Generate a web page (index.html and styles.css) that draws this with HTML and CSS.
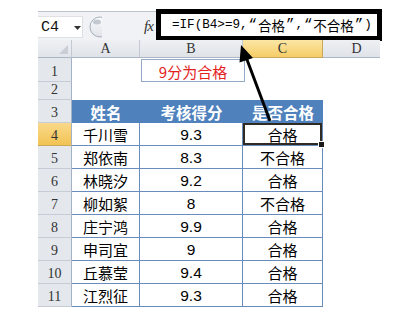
FILE: index.html
```html
<!DOCTYPE html>
<html lang="zh">
<head>
<meta charset="utf-8">
<link rel="stylesheet" href="styles.css">
</head>
<body>
<div class="sheet">
  <div class="fbar">
    <div class="namebox"><span class="ref">C4</span><svg class="dd" width="7" height="4" viewBox="0 0 7 4"><path d="M0 0H7L3.5 4Z" fill="#333"/></svg></div>
    <svg class="knob" width="16" height="22" viewBox="0 0 16 22">
      <defs><linearGradient id="kg" x1="0" y1="0" x2="0" y2="1"><stop offset="0" stop-color="#fbfcfd"/><stop offset="1" stop-color="#dfe3e8"/></linearGradient></defs>
      <circle cx="14" cy="11" r="10" fill="url(#kg)" stroke="#a7afba" stroke-width="1"/>
      <ellipse cx="11" cy="6" rx="4" ry="2.5" fill="#c3c9d1"/>
    </svg>
    <div class="fx">fx</div>
    <div class="formula">=IF(B4&gt;=9,<span class="q">“</span><span class="cj">合格</span><span class="q">”</span>,<span class="q">“</span><span class="cj">不合格</span><span class="q">”</span>)</div>
  </div>
  <div class="grid">
    <div class="corner"></div>
    <div class="ch">A</div>
    <div class="ch">B</div>
    <div class="ch chs">C</div>
    <div class="ch">D</div>

    <div class="rh">1</div><div class="c"></div><div class="c"><div class="note">9分为合格</div></div><div class="c"></div><div class="c"></div>
    <div class="rh">2</div><div class="c"></div><div class="c"></div><div class="c"></div><div class="c"></div>
    <div class="rh">3</div><div class="th">姓名</div><div class="th">考核得分</div><div class="th">是否合格</div><div class="c"></div>

    <div class="rh rhs">4</div><div class="td">千川雪</div><div class="td num">9.3</div><div class="td selc">合格</div><div class="c"></div>
    <div class="rh">5</div><div class="td">郑依南</div><div class="td num">8.3</div><div class="td">不合格</div><div class="c"></div>
    <div class="rh">6</div><div class="td">林晓汐</div><div class="td num">9.2</div><div class="td">合格</div><div class="c"></div>
    <div class="rh">7</div><div class="td">柳如絮</div><div class="td num">8</div><div class="td">不合格</div><div class="c"></div>
    <div class="rh">8</div><div class="td">庄宁鸿</div><div class="td num">9.9</div><div class="td">合格</div><div class="c"></div>
    <div class="rh">9</div><div class="td">申司宜</div><div class="td num">9</div><div class="td">合格</div><div class="c"></div>
    <div class="rh">10</div><div class="td">丘慕莹</div><div class="td num">9.4</div><div class="td">合格</div><div class="c"></div>
    <div class="rh">11</div><div class="td">江烈征</div><div class="td num">9.3</div><div class="td">合格</div><div class="c"></div>
  </div>
</div>
<svg class="arrow" width="400" height="316" viewBox="0 0 400 316">
  <line x1="270" y1="121" x2="246" y2="57" stroke="#000" stroke-width="3"/>
  <polygon points="241,45 253,58 239.5,62.5" fill="#000"/>
</svg>
</body>
</html>
```

FILE: styles.css
```css
html, body {
  margin: 0;
  padding: 0;
  background: #fff;
}
body {
  width: 400px;
  height: 316px;
  overflow: hidden;
  position: relative;
  font-family: "Noto Sans CJK SC", sans-serif;
}
.sheet {
  margin: 11px 0 0 38px;
  width: 342px;
}
.fbar {
  box-sizing: border-box;
  height: 29px;
  border-top: 1px solid #bcc3cd;
  background: #f0f2f5;
  display: flex;
  align-items: flex-start;
}
.namebox {
  box-sizing: border-box;
  width: 45px;
  height: 22px;
  margin-top: 4px;
  background: #fff;
  border: 1px solid #dde1e6;
  border-left: none;
  display: flex;
  align-items: center;
  padding-left: 3px;
}
.ref {
  font-family: "Liberation Mono", monospace;
  font-size: 15px;
  color: #111;
  width: 29px;
  line-height: 1;
}
.dd {
  margin-left: 4px;
  margin-top: 1px;
}
.knob {
  margin: 4px 0 0 3px;
}
.fx {
  font-family: "Liberation Serif", serif;
  font-style: italic;
  font-size: 15px;
  color: #333;
  margin: 6px 0 0 42px;
  width: 15px;
  letter-spacing: -1px;
}
.formula {
  box-sizing: border-box;
  flex: none;
  width: 226px;
  height: 32px;
  margin: -3px -4px 0 -3px;
  border: 5px solid #000;
  background: #fff;
  padding-left: 11px;
  display: flex;
  align-items: center;
  font-family: "Liberation Mono", monospace;
  font-size: 12.6px;
  color: #000;
  white-space: nowrap;
}
.q {
  font-family: "Liberation Mono", monospace;
  font-size: 14px;
  margin: 0 1px;
}
.cj {
  font-family: "Noto Sans CJK SC", sans-serif;
  font-size: 13.5px;
}
.grid {
  display: grid;
  grid-template-columns: 34px 68px 103px 80px 68px;
  grid-template-rows: 18px 24px 18px repeat(9, 23px);
  width: 342px;
  overflow: hidden;
}
.grid > div {
  box-sizing: border-box;
}
.corner {
  background: linear-gradient(#eef0f3, #e1e5ea);
  border-right: 1px solid #c4cad3;
  border-bottom: 1px solid #aab6c6;
  position: relative;
}
.corner::after {
  content: "";
  position: absolute;
  right: 3px;
  bottom: 3px;
  border-style: solid;
  border-width: 0 0 9px 9px;
  border-color: transparent transparent #c9ced6 transparent;
}
.ch {
  background: linear-gradient(#eef0f3, #dfe3e8);
  border-right: 1px solid #c4cad3;
  border-bottom: 1px solid #aab6c6;
  display: flex;
  align-items: center;
  justify-content: center;
  font-family: "Liberation Serif", serif;
  font-size: 14px;
  color: #333;
}
.ch.chs {
  background: linear-gradient(#fce6a6, #f5cd66);
  border-right-color: #c9a85a;
  border-bottom-color: #c9a85a;
}
.rh {
  background: #e4e8ed;
  border-right: 1px solid #a3b1c4;
  border-bottom: 1px solid #c6ccd5;
  display: flex;
  align-items: flex-end;
  justify-content: center;
  padding-bottom: 2px;
  font-family: "Liberation Serif", serif;
  font-size: 14px;
  line-height: 1;
  color: #333;
}
.rh.rhs {
  background: linear-gradient(#f9d98a, #f2c354);
  border-bottom-color: #c9a85a;
}
.c {
  background: transparent;
}
.note {
  box-sizing: border-box;
  height: 23px;
  margin: 1px -2px 0 1px;
  border: 1px solid #94a9c8;
  color: #e3211d;
  font-size: 15px;
  display: flex;
  align-items: center;
  justify-content: center;
  padding-top: 1px;
}
.th {
  background: #4f81bd;
  color: #fff;
  font-weight: 700;
  font-size: 15.5px;
  display: flex;
  align-items: center;
  justify-content: center;
}
.td {
  border-right: 1px solid #6a8bbe;
  border-bottom: 1px solid #6a8bbe;
  display: flex;
  align-items: center;
  justify-content: center;
  font-size: 15px;
  color: #000;
  padding-top: 1px;
}
.td.num {
  font-family: "Liberation Sans", sans-serif;
  font-size: 15.5px;
}
.td.selc {
  position: relative;
  box-shadow: inset 0 0 0 2px #2f2b22;
}
.td.selc::after {
  content: "";
  position: absolute;
  right: -3px;
  bottom: -3px;
  width: 5px;
  height: 5px;
  background: #1a1a1a;
  border: 1px solid #fff;
}
.arrow {
  position: absolute;
  left: 0;
  top: 0;
  pointer-events: none;
}
```
